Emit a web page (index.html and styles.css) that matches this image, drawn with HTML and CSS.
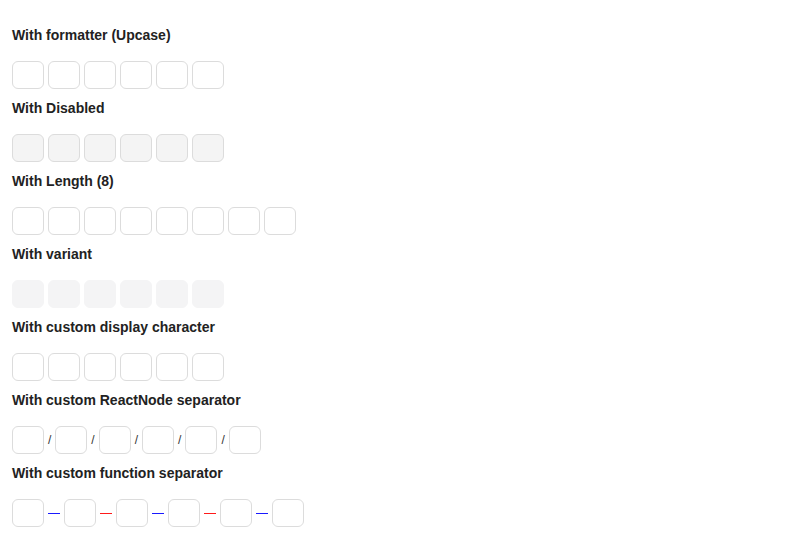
FILE: index.html
```html
<!DOCTYPE html>
<html lang="en">
<head>
<meta charset="utf-8">
<title>PinInput examples</title>
<link rel="stylesheet" href="styles.css">
</head>
<body>
<main class="page">
  <section class="demo">
    <h3 class="demo-title">With formatter (Upcase)</h3>
    <div class="pin">
      <input class="cell" maxlength="1"><input class="cell" maxlength="1"><input class="cell" maxlength="1"><input class="cell" maxlength="1"><input class="cell" maxlength="1"><input class="cell" maxlength="1">
    </div>
  </section>
  <section class="demo">
    <h3 class="demo-title">With Disabled</h3>
    <div class="pin">
      <input class="cell" disabled><input class="cell" disabled><input class="cell" disabled><input class="cell" disabled><input class="cell" disabled><input class="cell" disabled>
    </div>
  </section>
  <section class="demo">
    <h3 class="demo-title">With Length (8)</h3>
    <div class="pin">
      <input class="cell" maxlength="1"><input class="cell" maxlength="1"><input class="cell" maxlength="1"><input class="cell" maxlength="1"><input class="cell" maxlength="1"><input class="cell" maxlength="1"><input class="cell" maxlength="1"><input class="cell" maxlength="1">
    </div>
  </section>
  <section class="demo">
    <h3 class="demo-title">With variant</h3>
    <div class="pin">
      <input class="cell cell-filled" maxlength="1"><input class="cell cell-filled" maxlength="1"><input class="cell cell-filled" maxlength="1"><input class="cell cell-filled" maxlength="1"><input class="cell cell-filled" maxlength="1"><input class="cell cell-filled" maxlength="1">
    </div>
  </section>
  <section class="demo">
    <h3 class="demo-title">With custom display character</h3>
    <div class="pin">
      <input class="cell" maxlength="1"><input class="cell" maxlength="1"><input class="cell" maxlength="1"><input class="cell" maxlength="1"><input class="cell" maxlength="1"><input class="cell" maxlength="1">
    </div>
  </section>
  <section class="demo">
    <h3 class="demo-title">With custom ReactNode separator</h3>
    <div class="pin">
      <input class="cell" maxlength="1"><span class="sep-slash">/</span><input class="cell" maxlength="1"><span class="sep-slash">/</span><input class="cell" maxlength="1"><span class="sep-slash">/</span><input class="cell" maxlength="1"><span class="sep-slash">/</span><input class="cell" maxlength="1"><span class="sep-slash">/</span><input class="cell" maxlength="1">
    </div>
  </section>
  <section class="demo">
    <h3 class="demo-title">With custom function separator</h3>
    <div class="pin">
      <input class="cell" maxlength="1"><span class="sep-dash sep-blue"></span><input class="cell" maxlength="1"><span class="sep-dash sep-red"></span><input class="cell" maxlength="1"><span class="sep-dash sep-blue"></span><input class="cell" maxlength="1"><span class="sep-dash sep-red"></span><input class="cell" maxlength="1"><span class="sep-dash sep-blue"></span><input class="cell" maxlength="1">
    </div>
  </section>
</main>
</body>
</html>
```

FILE: styles.css
```css
* {
  box-sizing: border-box;
}

html, body {
  margin: 0;
  padding: 0;
  background: #ffffff;
}

body {
  font-family: "Liberation Sans", Arial, sans-serif;
  color: #222222;
}

.page {
  padding: 25px 12px 0 12px;
  display: flex;
  flex-direction: column;
  gap: 9px;
}

.demo {
  display: flex;
  flex-direction: column;
  gap: 16px;
}

.demo-title {
  margin: 0;
  font-size: 14px;
  line-height: 20px;
  font-weight: 700;
  color: #222222;
}

.pin {
  display: flex;
  align-items: center;
  gap: 4px;
  height: 28px;
}

.cell {
  width: 32px;
  height: 28px;
  margin: 0;
  padding: 0;
  border: 1px solid #dcdcdc;
  border-radius: 6px;
  background: #ffffff;
  font: inherit;
  text-align: center;
  outline: none;
}

.cell:disabled {
  background: #f4f4f4;
  border-color: #dcdcdc;
}

.cell-filled {
  background: #f4f4f5;
  border-color: #f4f4f5;
}

.sep-slash {
  font-size: 12px;
  line-height: 14px;
  color: #333333;
}

.sep-dash {
  width: 12px;
  height: 1px;
}

.sep-blue {
  background: #1a1aff;
}

.sep-red {
  background: #ff1a1a;
}
```
